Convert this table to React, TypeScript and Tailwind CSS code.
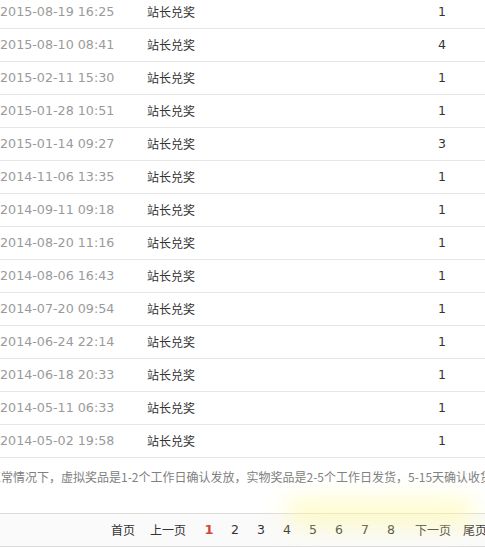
import React from "react";

const rows: [string, string][] = [
  ["2015-08-19 16:25", "1"],
  ["2015-08-10 08:41", "4"],
  ["2015-02-11 15:30", "1"],
  ["2015-01-28 10:51", "1"],
  ["2015-01-14 09:27", "3"],
  ["2014-11-06 13:35", "1"],
  ["2014-09-11 09:18", "1"],
  ["2014-08-20 11:16", "1"],
  ["2014-08-06 16:43", "1"],
  ["2014-07-20 09:54", "1"],
  ["2014-06-24 22:14", "1"],
  ["2014-06-18 20:33", "1"],
  ["2014-05-11 06:33", "1"],
  ["2014-05-02 19:58", "1"],
];

const cjk = { fontFamily: '"Noto Sans CJK SC", "Noto Sans", sans-serif' };
const num = { fontFamily: '"DejaVu Sans", Verdana, sans-serif' };

export default function App() {
  return (
    <div className="relative w-[485px] h-[547px] overflow-hidden bg-white">
      <div className="mt-[-4px]">
        {rows.map(([d, n], i) => (
          <div key={i} className="flex items-center h-[33px] border-b border-[#e6e6e6]">
            <div className="w-[147px] shrink-0 text-[12.7px] text-[#9a9a9a]" style={num}>
              {d}
            </div>
            <div className="w-[252px] shrink-0 text-[12px] text-[#333]" style={cjk}>
              站长兑奖
            </div>
            <div className="w-[90px] text-center text-[12.5px] text-[#333]" style={num}>
              {n}
            </div>
          </div>
        ))}
      </div>
      <div className="h-[55px] pt-[11px] leading-[16px] ml-[-11px] whitespace-nowrap text-[12px] text-[#808080]" style={cjk}>
        正常情况下，虚拟奖品是1-2个工作日确认发放，实物奖品是2-5个工作日发货，5-15天确认收货
      </div>
      <div className="h-[34px] border-t border-b border-[#dcdcdc] bg-[#fafafa] flex items-center pl-[111px] whitespace-nowrap text-[12px] text-[#333]" style={cjk}>
        <span className="w-[24px] shrink-0">首页</span>
        <span className="ml-[15px] w-[36px] shrink-0">上一页</span>
        <span className="ml-[10px] w-[26px] shrink-0 text-center font-bold text-[#cf4a36] text-[13px]" style={num}>1</span>
        {["2", "3", "4", "5", "6", "7", "8"].map((p) => (
          <span key={p} className="w-[26px] shrink-0 text-center text-[12.5px]" style={num}>
            {p}
          </span>
        ))}
        <span className="ml-[11px] w-[36px] shrink-0">下一页</span>
        <span className="ml-[12px] w-[24px] shrink-0">尾页</span>
      </div>
      <div className="pointer-events-none absolute left-[285px] top-[500px] w-[190px] h-[26px] rounded-full bg-[#fffaa0] opacity-60 blur-md" />
    </div>
  );
}
